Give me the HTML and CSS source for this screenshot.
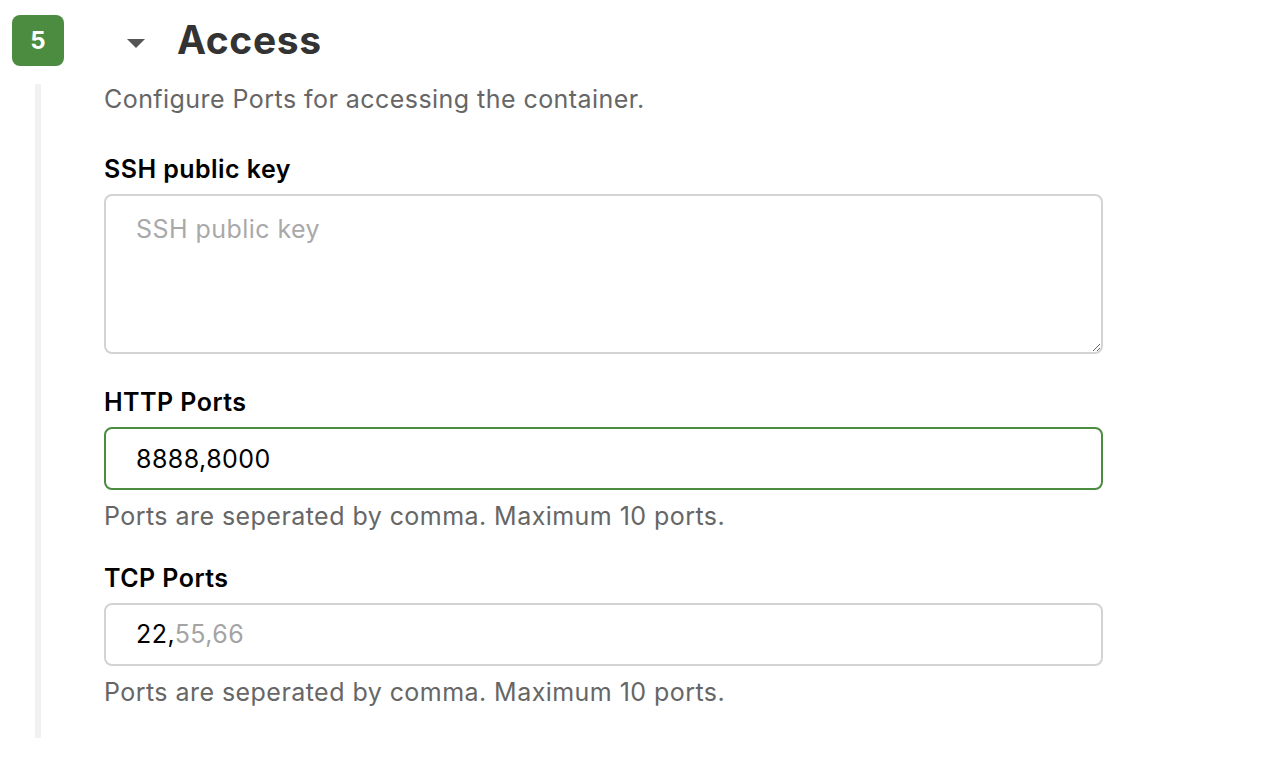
FILE: index.html
```html
<!DOCTYPE html>
<html lang="en">
<head>
  <meta charset="UTF-8" />
  <title>Access</title>
  <link rel="stylesheet" href="styles.css">
</head>
<body>

  <section class="step">
    <div class="step-head">
      <div class="step-num">5</div>
      <span class="caret"></span>
      <h2>Access</h2>
    </div>

    <div class="step-body">
      <p class="desc">Configure Ports for accessing the container.</p>

      <label for="sshKey">SSH public key</label>
      <textarea id="sshKey" placeholder="SSH public key"></textarea>

      <label for="httpPorts">HTTP Ports</label>
      <input type="text" id="httpPorts" class="focused" value="8888,8000" />
      <p class="hint">Ports are seperated by comma. Maximum 10 ports.</p>

      <label for="tcpPorts">TCP Ports</label>
      <div id="tcpPorts" class="field"><span class="typed">22,</span><span class="suggest">55,66</span></div>
      <p class="hint">Ports are seperated by comma. Maximum 10 ports.</p>
    </div>
  </section>

</body>
</html>
```

FILE: styles.css
```css
* { box-sizing: border-box; margin: 0; padding: 0; }
body {
  font-family: 'Inter', 'Liberation Sans', sans-serif;
  background: #fff;
  color: #000;
}

.step {
  padding: 14px 12px 21px;
}

.step-head {
  display: flex;
  align-items: center;
  height: 52px;
}

.step-num {
  width: 52px;
  height: 51px;
  border-radius: 8px;
  background: #4b8c41;
  color: #fff;
  font-weight: 700;
  font-size: 24px;
  display: flex;
  align-items: center;
  justify-content: center;
}

.caret {
  width: 0;
  height: 0;
  border-left: 9px solid transparent;
  border-right: 9px solid transparent;
  border-top: 9px solid #555;
  margin-left: 63px;
  margin-top: 6px;
}

h2 {
  font-size: 39px;
  font-weight: 700;
  letter-spacing: 0.6px;
  color: #333;
  margin-left: 32px;
  margin-top: -2px;
}

.step-body {
  margin-left: 23px;
  margin-top: 20px;
  border-left: 6px solid #f1f1f1;
  padding-left: 63px;
  padding-right: 153px;
  padding-bottom: 31px;
}

.desc,
label,
.hint,
textarea,
input,
.field {
  font-size: 25px;
  letter-spacing: 0.45px;
}

.desc {
  color: #666;
  line-height: 30px;
  margin-top: -2px;
  margin-bottom: 40px;
}

label {
  display: block;
  font-weight: 600;
  line-height: 30px;
  margin-bottom: 10px;
}

textarea,
input,
.field {
  display: block;
  width: 100%;
  font-family: inherit;
  color: #000;
  border: 2px solid #d3d3d3;
  border-radius: 8px;
  padding: 0 30px;
  background: #fff;
  outline: none;
}

textarea {
  height: 160px;
  padding-top: 18px;
  line-height: 30px;
  resize: vertical;
  margin-bottom: 33px;
}

textarea::placeholder {
  color: #a9a9a9;
}

input,
.field {
  height: 63px;
  line-height: 59px;
}

input.focused {
  border-color: #4b8c41;
}

.suggest {
  color: #a4a4a4;
}

.hint {
  color: #666;
  line-height: 30px;
  margin-top: 11px;
  margin-bottom: 32px;
}

.hint:last-child {
  margin-bottom: 0;
}
```
